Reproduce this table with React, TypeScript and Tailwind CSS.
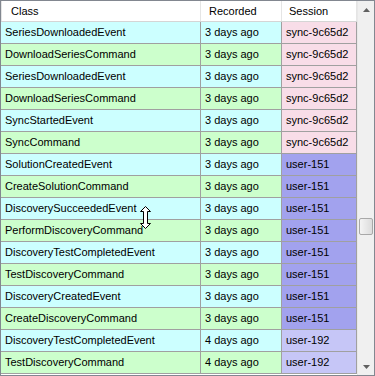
const rows = [
  { cls: "SeriesDownloadedEvent", rec: "3 days ago", ses: "sync-9c65d2" },
  { cls: "DownloadSeriesCommand", rec: "3 days ago", ses: "sync-9c65d2" },
  { cls: "SeriesDownloadedEvent", rec: "3 days ago", ses: "sync-9c65d2" },
  { cls: "DownloadSeriesCommand", rec: "3 days ago", ses: "sync-9c65d2" },
  { cls: "SyncStartedEvent", rec: "3 days ago", ses: "sync-9c65d2" },
  { cls: "SyncCommand", rec: "3 days ago", ses: "sync-9c65d2" },
  { cls: "SolutionCreatedEvent", rec: "3 days ago", ses: "user-151" },
  { cls: "CreateSolutionCommand", rec: "3 days ago", ses: "user-151" },
  { cls: "DiscoverySucceededEvent", rec: "3 days ago", ses: "user-151" },
  { cls: "PerformDiscoveryCommand", rec: "3 days ago", ses: "user-151" },
  { cls: "DiscoveryTestCompletedEvent", rec: "3 days ago", ses: "user-151" },
  { cls: "TestDiscoveryCommand", rec: "3 days ago", ses: "user-151" },
  { cls: "DiscoveryCreatedEvent", rec: "3 days ago", ses: "user-151" },
  { cls: "CreateDiscoveryCommand", rec: "3 days ago", ses: "user-151" },
  { cls: "DiscoveryTestCompletedEvent", rec: "4 days ago", ses: "user-192" },
  { cls: "TestDiscoveryCommand", rec: "4 days ago", ses: "user-192" },
];

// warna sesi
const sessionBg: { [key: string]: string } = {
  "sync-9c65d2": "bg-[#f8dde8]",
  "user-151": "bg-[#a2a2ee]",
  "user-192": "bg-[#c6c6f7]",
};

export default function App() {
  return (
    <div
      className="relative w-[375px] h-[376px] border border-[#828790] bg-white flex overflow-hidden text-[11px] text-black"
      style={{ fontFamily: '"Liberation Sans", Arial, sans-serif' }}
    >
      {/* Tabel */}
      <div className="w-[356px] flex flex-col">
        {/* Header */}
        <div className="flex h-[21px] border-b border-[#d5d5d5] bg-white">
          <div className="w-[200px] pl-[9px] flex items-center border-l border-[#e5e5e5] border-r">
            Class
          </div>
          <div className="w-[81px] pl-[8px] flex items-center border-r border-[#e5e5e5]">
            Recorded
          </div>
          <div className="w-[75px] pl-[7px] flex items-center border-r border-[#e5e5e5]">
            Session
          </div>
        </div>

        {/* Baris data */}
        {rows.map((r, i) => {
          const rowBg = i % 2 === 0 ? "bg-[#ccffff]" : "bg-[#ccffcc]";
          return (
            <div key={i} className="flex h-[22px] shrink-0 border-b border-[#a0a0a0]">
              <div className={`w-[200px] pl-[4px] flex items-center border-r border-[#a0a0a0] ${rowBg}`}>
                {r.cls}
              </div>
              <div className={`w-[81px] pl-[4px] flex items-center border-r border-[#a0a0a0] ${rowBg}`}>
                {r.rec}
              </div>
              <div className={`w-[75px] pl-[4px] flex items-center border-r border-[#a0a0a0] ${sessionBg[r.ses]}`}>
                {r.ses}
              </div>
            </div>
          );
        })}
      </div>

      {/* Scrollbar */}
      <div className="w-[17px] flex flex-col bg-[#f0f0f0] border-l border-[#e8e8e8]">
        <div className="h-[17px] flex items-center justify-center">
          <svg width="7" height="4" viewBox="0 0 7 4">
            <path d="M3.5 0 L7 4 L0 4 Z" fill="#606060" />
          </svg>
        </div>
        <div className="flex-1 relative">
          <div className="absolute left-[1px] right-[1px] top-[200px] h-[17px] border border-[#a8a8a8] rounded-[2px] bg-gradient-to-r from-[#f4f4f4] to-[#dcdcdc]" />
        </div>
        <div className="h-[17px] flex items-center justify-center">
          <svg width="7" height="4" viewBox="0 0 7 4">
            <path d="M0 0 L7 0 L3.5 4 Z" fill="#606060" />
          </svg>
        </div>
      </div>

      {/* Kursor resize */}
      <svg
        className="absolute left-[139px] top-[205px]"
        width="11"
        height="23"
        viewBox="0 0 11 23"
      >
        <path
          d="M5.5 0.5 L10.5 5.5 L7.5 5.5 L7.5 17.5 L10.5 17.5 L5.5 22.5 L0.5 17.5 L3.5 17.5 L3.5 5.5 L0.5 5.5 Z"
          fill="white"
          stroke="black"
          strokeWidth="1"
        />
      </svg>
    </div>
  );
}
